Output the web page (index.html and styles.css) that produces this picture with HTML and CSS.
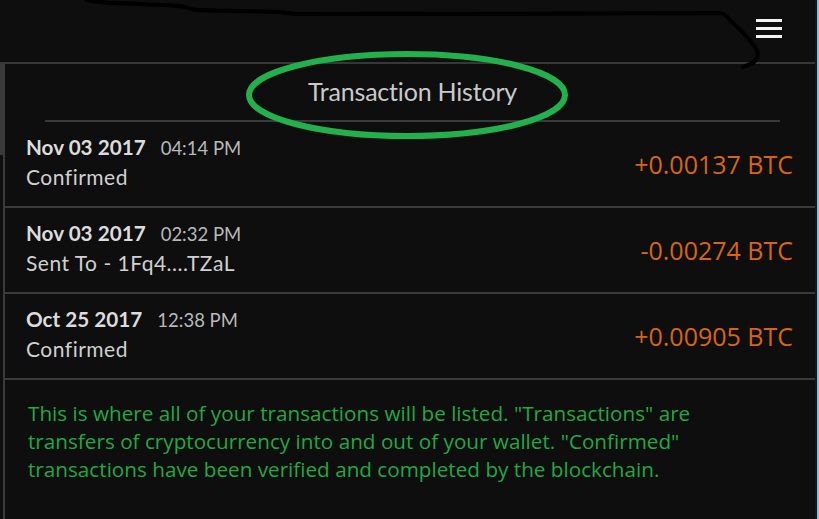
FILE: index.html
```html
<!DOCTYPE html>
<html>
<head>
<meta charset="utf-8">
<link rel="stylesheet" href="styles.css">
</head>
<body>
<div class="app">
  <div class="main">
    <header class="topbar">
      <button class="menu" aria-label="Menu"><span></span><span></span><span></span></button>
    </header>
    <div class="content">
      <div class="scrolltrack"><div class="thumb"></div></div>
      <section class="panel">
        <div class="title-wrap">
          <h1 class="title">Transaction History</h1>
        </div>
        <ul class="tx-list">
          <li class="tx">
            <div class="tx-info">
              <div class="tx-when"><span class="tx-date">Nov 03 2017</span><span class="tx-time">04:14 PM</span></div>
              <div class="tx-status">Confirmed</div>
            </div>
            <div class="tx-amount">+0.00137 BTC</div>
          </li>
          <li class="tx">
            <div class="tx-info">
              <div class="tx-when"><span class="tx-date">Nov 03 2017</span><span class="tx-time">02:32 PM</span></div>
              <div class="tx-status">Sent To - 1Fq4....TZaL</div>
            </div>
            <div class="tx-amount">-0.00274 BTC</div>
          </li>
          <li class="tx">
            <div class="tx-info">
              <div class="tx-when"><span class="tx-date">Oct 25 2017</span><span class="tx-time">12:38 PM</span></div>
              <div class="tx-status">Confirmed</div>
            </div>
            <div class="tx-amount">+0.00905 BTC</div>
          </li>
        </ul>
        <p class="note">This is where all of your transactions will be listed. "Transactions" are<br>transfers of cryptocurrency into and out of your wallet. "Confirmed"<br>transactions have been verified and completed by the blockchain.</p>
      </section>
    </div>
  </div>
  <div class="edge"></div>
</div>
<svg class="annot-scribble" width="819" height="80" viewBox="0 0 819 80">
  <path d="M86 0 C95 1 105 3 113 3 C140 4 165 5 180 6 C188 7 190 9 196 10 C230 11 260 11 280 12 C288 13 290 14 296 14 C400 15 600 13 720 13 C727 14 728 18 731 21 C737 27 742 31 747 37 C752 43 756 47 757 51 C759 56 757 61 752 63 C749 65 746 66 743 67" fill="none" stroke="#000" stroke-width="4" stroke-linecap="round" stroke-linejoin="round"/>
</svg>
<svg class="annot-ellipse" width="340" height="100" viewBox="0 0 340 100">
  <ellipse cx="167" cy="50" rx="158" ry="41" fill="none" stroke="#22b14c" stroke-width="6"/>
</svg>
</body>
</html>
```
FILE: styles.css
```css
html, body {
  margin: 0;
  padding: 0;
}
body {
  width: 819px;
  height: 519px;
  overflow: hidden;
  background: #0e0e0e;
  position: relative;
  font-family: Lato, "Open Sans", sans-serif;
}
.app {
  display: flex;
  height: 519px;
}
.main {
  flex: 1;
  display: flex;
  flex-direction: column;
  min-width: 0;
}
.edge {
  width: 2px;
  background: #9fb7de;
  border-left: 2px solid #181818;
}
.topbar {
  height: 62px;
  border-bottom: 2px solid #373737;
  display: flex;
  justify-content: flex-end;
  align-items: flex-start;
  padding-right: 33px;
}
.menu {
  margin-top: 19px;
  width: 26px;
  padding: 0;
  border: 0;
  background: none;
  display: flex;
  flex-direction: column;
  gap: 5px;
}
.menu span {
  display: block;
  height: 3px;
  background: #f2f2f2;
}
.content {
  flex: 1;
  display: flex;
}
.scrolltrack {
  width: 3px;
}
.thumb {
  height: 91px;
  background: #3a3a3a;
}
.panel {
  flex: 1;
  border-left: 2px solid #3a3a3a;
  display: flex;
  flex-direction: column;
}
.title-wrap {
  padding: 0 35px 0 40px;
}
.title {
  margin: 0;
  height: 58px;
  box-sizing: border-box;
  padding-top: 14px;
  border-bottom: 2px solid #3a3a3a;
  text-align: center;
  font-weight: 400;
  font-size: 25px;
  line-height: 26px;
  color: #c9c9c9;
  letter-spacing: -0.2px;
}
.tx-list {
  list-style: none;
  margin: 0;
  padding: 0;
}
.tx {
  height: 84px;
  border-bottom: 2px solid #3a3a3a;
  display: flex;
  align-items: center;
  justify-content: space-between;
  padding: 0 22px 0 21px;
}
.tx-info {
  display: flex;
  flex-direction: column;
  gap: 5px;
  margin-bottom: 5px;
}
.tx-when {
  display: flex;
  align-items: baseline;
  gap: 15px;
  line-height: 24px;
}
.tx-date {
  font-size: 20.7px;
  font-weight: 700;
  color: #dcdcdc;
}
.tx-time {
  font-size: 18.5px;
  color: #b9b9b9;
}
.tx-status {
  font-size: 21px;
  letter-spacing: 0.5px;
  line-height: 24px;
  color: #d0d0d0;
}
.tx-amount {
  font-family: "Open Sans", sans-serif;
  font-size: 25px;
  color: #d9650f;
}
.note {
  margin: 0;
  padding: 19px 0 0 23px;
  font-family: "Open Sans", sans-serif;
  font-size: 20.7px;
  line-height: 28px;
  color: #22a845;
}
.annot-scribble {
  position: absolute;
  left: 0;
  top: 0;
  pointer-events: none;
}
.annot-ellipse {
  position: absolute;
  left: 240px;
  top: 45px;
  pointer-events: none;
}
```
